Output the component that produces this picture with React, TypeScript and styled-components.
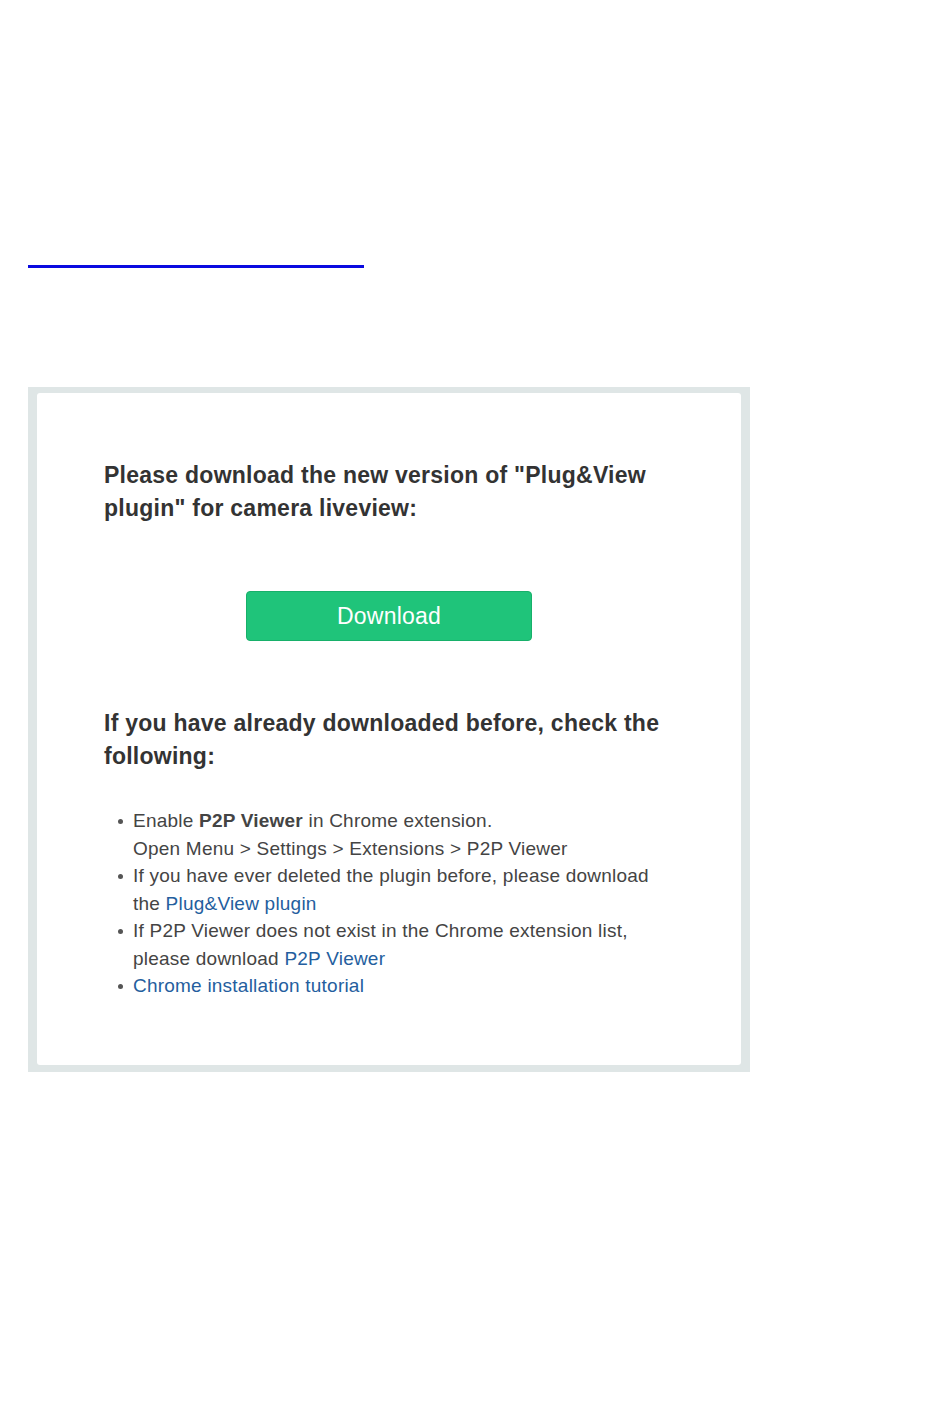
import React from "react";
import styled, { createGlobalStyle } from "styled-components";

const Global = createGlobalStyle`
  html, body { margin: 0; padding: 0; background: #ffffff; }
  body { font-family: "Liberation Sans", Arial, sans-serif; }
`;

const Page = styled.div`
  width: 950px;
  min-height: 1403px;
  padding: 265px 0 0 28px;
  box-sizing: border-box;
`;

const Rule = styled.div`
  width: 336px;
  height: 3px;
  background: #0a0ae0;
`;

const Frame = styled.div`
  margin-top: 119px;
  width: 722px;
  box-sizing: border-box;
  background: #dfe6e6;
  padding: 6px 9px 7px 9px;
`;

const Card = styled.div`
  background: #ffffff;
  border-radius: 3px;
  padding: 66px 40px 65px 67px;
  color: #333333;
`;

const Heading = styled.h2`
  margin: 0;
  max-width: 580px;
  font-size: 23px;
  letter-spacing: 0.25px;
  line-height: 33px;
  font-weight: bold;
  color: #333333;
`;

const ButtonRow = styled.div`
  display: flex;
  justify-content: center;
  padding-right: 27px;
  margin: 66px 0 66px;
`;

const DownloadButton = styled.button`
  width: 286px;
  height: 50px;
  background: #1fc47a;
  border: 1px solid #17b06a;
  border-radius: 4px;
  color: #ffffff;
  font-family: "Liberation Sans", Arial, sans-serif;
  font-size: 23px;
  letter-spacing: 0.2px;
  cursor: pointer;
`;

const List = styled.ul`
  margin: 34px 0 0 0;
  padding: 0 0 0 29px;
  max-width: 530px;
  list-style: none;
`;

const Item = styled.li`
  position: relative;
  font-size: 19px;
  letter-spacing: 0.22px;
  line-height: 27.5px;
  color: #444444;
  &::before {
    content: "";
    position: absolute;
    left: -15px;
    top: 12px;
    width: 5px;
    height: 5px;
    border-radius: 50%;
    background: #555555;
  }
`;

const Link = styled.a`
  color: #245e9e;
  text-decoration: none;
`;

export default function App() {
  return (
    <>
      <Global />
      <Page>
        <Rule />
        <Frame>
          <Card>
            <Heading>
              Please download the new version of "Plug&amp;View plugin" for camera liveview:
            </Heading>
            <ButtonRow>
              <DownloadButton>Download</DownloadButton>
            </ButtonRow>
            <Heading>If you have already downloaded before, check the following:</Heading>
            <List>
              <Item>
                Enable <b>P2P Viewer</b> in Chrome extension.
                <br />
                Open Menu &gt; Settings &gt; Extensions &gt; P2P Viewer
              </Item>
              <Item>
                If you have ever deleted the plugin before, please download the{" "}
                <Link href="#">Plug&amp;View plugin</Link>
              </Item>
              <Item>
                If P2P Viewer does not exist in the Chrome extension list, please download{" "}
                <Link href="#">P2P Viewer</Link>
              </Item>
              <Item>
                <Link href="#">Chrome installation tutorial</Link>
              </Item>
            </List>
          </Card>
        </Frame>
      </Page>
    </>
  );
}
